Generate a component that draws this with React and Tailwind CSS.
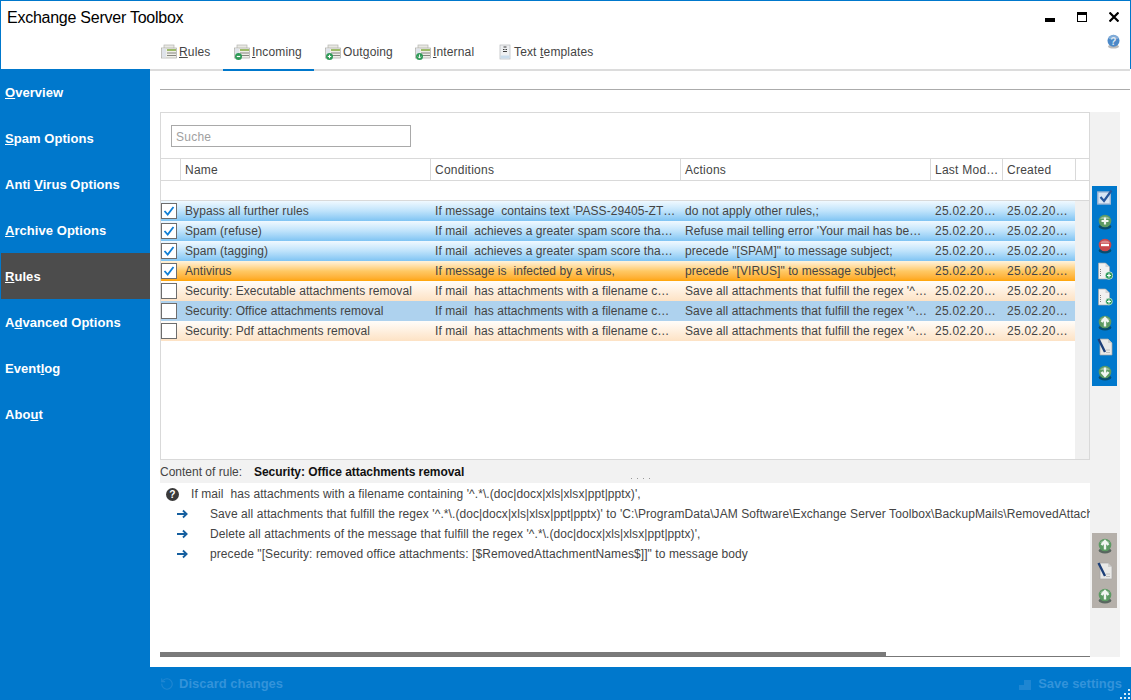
import React from "react";
import { RotateCcw } from "lucide-react";

const navItems = [
  { pre: "", key: "O", post: "verview" },
  { pre: "", key: "S", post: "pam Options" },
  { pre: "Anti ", key: "V", post: "irus Options" },
  { pre: "", key: "A", post: "rchive Options" },
  { pre: "", key: "R", post: "ules", active: true },
  { pre: "A", key: "d", post: "vanced Options" },
  { pre: "Event", key: "l", post: "og" },
  { pre: "Abo", key: "u", post: "t" },
];

const tabs = [
  { pre: "", key: "R", post: "ules", w: "w-[63px] pl-px", badge: null },
  { pre: "", key: "I", post: "ncoming", w: "w-[91px] pl-[11px]", badge: "minus" },
  { pre: "Out", key: "g", post: "oing", w: "w-[90px] pl-[11px]", badge: "plus" },
  { pre: "", key: "I", post: "nternal", w: "w-[90px] pl-[11px]", badge: "down" },
];

const rows = [
  { name: "Bypass all further rules", cond: "If message  contains text 'PASS-29405-ZT…", action: "do not apply other rules,;", tone: "blue", on: true },
  { name: "Spam (refuse)", cond: "If mail  achieves a greater spam score tha…", action: "Refuse mail telling error 'Your mail has be…", tone: "blue", on: true },
  { name: "Spam (tagging)", cond: "If mail  achieves a greater spam score tha…", action: "precede \"[SPAM]\" to message subject;", tone: "blue", on: true },
  { name: "Antivirus", cond: "If message is  infected by a virus,", action: "precede \"[VIRUS]\" to message subject;", tone: "orange", on: true },
  { name: "Security: Executable attachments removal", cond: "If mail  has attachments with a filename c…", action: "Save all attachments that fulfill the regex '^…", tone: "peach" },
  { name: "Security: Office attachments removal", cond: "If mail  has attachments with a filename c…", action: "Save all attachments that fulfill the regex '^…", tone: "selected" },
  { name: "Security: Pdf attachments removal", cond: "If mail  has attachments with a filename c…", action: "Save all attachments that fulfill the regex '^…", tone: "peach" },
];

const toneClass = {
  blue: "bg-gradient-to-b from-[#f0f9ff] via-[#bfe3fb] to-[#7fc4f3]",
  orange: "bg-gradient-to-b from-[#fff3dc] via-[#ffc964] to-[#ffa500]",
  peach: "bg-gradient-to-b from-[#fffdfa] to-[#fde2c4]",
  selected: "bg-[#aed2ee]",
};

const details = [
  "Save all attachments that fulfill the regex '^.*\\.(doc|docx|xls|xlsx|ppt|pptx)' to 'C:\\ProgramData\\JAM Software\\Exchange Server Toolbox\\BackupMails\\RemovedAttachments\\Office'",
  "Delete all attachments of the message that fulfill the regex '^.*\\.(doc|docx|xls|xlsx|ppt|pptx)',",
  "precede \"[Security: removed office attachments: [$RemovedAttachmentNames$]]\" to message body",
];

const Badge = ({ kind }) => (
  <>
    <circle cx="4.5" cy="12.5" r="3.5" fill="#2f9a57" />
    {kind === "plus" && <path d="M2.8 12.5h3.4M4.5 10.8v3.4" stroke="#fff" strokeWidth="1.1" />}
    {kind === "minus" && <path d="M2.8 12.5h3.4" stroke="#fff" strokeWidth="1.2" />}
    {kind === "down" && <path d="M4.5 10.5v3.6M3 12.6l1.5 1.5 1.5-1.5" stroke="#fff" strokeWidth="0.9" fill="none" />}
  </>
);

const SheetIcon = ({ badge }) => (
  <svg width="16" height="16" viewBox="0 0 16 16" className="mr-0.5 shrink-0">
    <rect x="3" y="1" width="10" height="4" fill="#e9e9e4" stroke="#b5b5b0" strokeWidth="0.7" />
    <rect x="0.5" y="4" width="15" height="10" fill="#efefe9" stroke="#aaaaa5" strokeWidth="0.7" />
    <rect x="1" y="4.5" width="4" height="9" fill="#dfe3ea" />
    <rect x="6" y="5" width="9" height="2" fill="#9dbb69" />
    <path d="M6 9h9M6 11.5h9" stroke="#85857f" strokeWidth="1" />
    {badge && <Badge kind={badge} />}
  </svg>
);

const TemplateIcon = () => (
  <svg width="16" height="16" viewBox="0 0 16 16" className="mr-px shrink-0">
    <rect x="3" y="1" width="10" height="14" fill="#eef0f2" stroke="#b5b8bb" strokeWidth="0.7" />
    <rect x="3.5" y="11.5" width="9" height="3" fill="#c9dcec" />
    <path d="M6.5 3h3M6 5.5h1.5M8.5 5.5h1.5M6 7.5h4" stroke="#3c3c3c" strokeWidth="1" />
  </svg>
);

const RoundIcon = ({ kind, red }) => (
  <svg width="16" height="17" viewBox="0 0 16 17">
    <ellipse cx="8" cy="13.5" rx="6.3" ry="3" fill="#0d2a22" opacity="0.55" />
    <circle cx="8" cy="8" r="6.3" fill={red ? "#c9474c" : "#5c9a63"} />
    <path d="M3 6a5.4 4 0 0 1 10 0z" fill="#fff" opacity="0.35" />
    {kind === "plus" && <path d="M4.5 8h7M8 4.5v7" stroke="#f2f6f2" strokeWidth="2.2" />}
    {kind === "minus" && <path d="M4 8h8" stroke="#fff" strokeWidth="2.4" />}
    {kind === "up" && <path d="M8 12.5V5M4.5 8 8 4l3.5 4" stroke="#f2f6f2" strokeWidth="2.4" fill="none" />}
    {kind === "down" && <path d="M8 3.5V11M4.5 8 8 12l3.5-4" stroke="#f2f6f2" strokeWidth="2.4" fill="none" />}
  </svg>
);

const CheckListIcon = () => (
  <svg width="16" height="16" viewBox="0 0 16 16">
    <rect x="0.8" y="3" width="12.5" height="12" fill="#d8e6f4" stroke="#9db4d2" strokeWidth="1.4" />
    <path d="M3.5 8 7 12l7.5-10.5" stroke="#27579c" strokeWidth="2.2" fill="none" />
  </svg>
);

const DocPlusIcon = ({ small }) => (
  <svg width="16" height="18" viewBox="0 0 16 18">
    <path d="M1.5 1h7l4 4v12h-11z" fill="#f1f1f1" stroke="#a8a8a8" strokeWidth="0.7" />
    <path d="M8.5 1v4h4" fill="#d4d4d4" />
    <path d="M3.5 7v7" stroke="#777" strokeWidth="0.9" strokeDasharray="1 1" />
    <circle cx="12" cy="13.5" r={small ? 3.4 : 3.8} fill="#2c9a5a" stroke="#fff" strokeWidth="0.6" />
    <path d="M10 13.5h4M12 11.5v4" stroke="#fff" strokeWidth="1.2" />
  </svg>
);

const PenDocIcon = () => (
  <svg width="16" height="18" viewBox="0 0 16 18">
    <path d="M3 1h8l4 4v12H3z" fill="#e9e9e7" stroke="#a8a8a8" strokeWidth="0.7" />
    <path d="M11 1v4h4" fill="#cfcfcd" />
    <path d="M9 12h4M9 14.5h4" stroke="#b5b5b5" strokeWidth="0.8" />
    <path d="M1.5 1l6.5 13" stroke="#1d3f78" strokeWidth="2.4" />
  </svg>
);

const HelpIcon = () => (
  <svg width="13" height="15" viewBox="0 0 13 15">
    <ellipse cx="6.5" cy="12.5" rx="5.5" ry="2" fill="#555" opacity="0.4" />
    <circle cx="6.5" cy="6.7" r="6" fill="#4c89c8" />
    <path d="M1.5 5a5 4 0 0 1 10 0z" fill="#fff" opacity="0.3" />
    <text x="6.5" y="10.5" textAnchor="middle" fontSize="10" fontWeight="700" fill="#dfe8f0" fontFamily="Liberation Sans, sans-serif">?</text>
  </svg>
);

const Checkbox = ({ on }) => (
  <div className="flex h-4 w-4 shrink-0 items-center justify-center border border-[#6d6d6d] bg-white">
    {on && (
      <svg width="12" height="12" viewBox="0 0 12 12">
        <path d="M1.5 6 4.7 9.6 10.5 2" stroke="#0f7fd6" strokeWidth="1.8" fill="none" />
      </svg>
    )}
  </div>
);

const HeaderCell = ({ className, children }) => (
  <div className={`flex h-full items-center truncate border-r border-[#d9d9d9] px-1 ${className}`}>{children}</div>
);

const Cell = ({ className, children }) => (
  <div className={`overflow-hidden text-ellipsis whitespace-pre px-1 ${className}`}>{children}</div>
);

const App = () => {
  return (
    <div className="flex h-[700px] w-[1131px] flex-col overflow-hidden bg-white text-[12px] tracking-[0.25px] text-[#444] font-['Liberation_Sans',Arial,sans-serif]">
      {/* top bar */}
      <div className="h-[69px] shrink-0 border-x border-t border-[#0078cc] bg-white">
        <div className="flex h-[34px] items-center justify-between pl-1.5 pr-[11px]">
          <div className="text-[16px] tracking-[-0.25px] text-black">Exchange Server Toolbox</div>
          <div className="mb-[3px] flex items-center">
            <div className="mt-[7px] h-1 w-[10px] bg-black" />
            <div className="ml-[22px] h-[10px] w-[10px] border border-black border-t-[3px]" />
            <svg width="10" height="10" viewBox="0 0 10 10" className="ml-[22px]">
              <path d="M0.5 0.5l9 9M9.5 0.5l-9 9" stroke="#000" strokeWidth="2.2" />
            </svg>
          </div>
        </div>
        <div className="flex h-[34px] items-start justify-between pr-[10px]">
          <div className="flex h-full pl-[159px] tracking-[0.15px]">
            {tabs.map((t) => (
              <div key={t.pre + t.key + t.post} className={`flex h-full items-center ${t.w}`}>
                <SheetIcon badge={t.badge} />
                <span>
                  {t.pre}
                  <span className="underline">{t.key}</span>
                  {t.post}
                </span>
              </div>
            ))}
            <div className="flex h-full items-center pl-[3px]">
              <TemplateIcon />
              <span>
                Text <span className="underline">t</span>emplates
              </span>
            </div>
          </div>
          <div className="-mt-px">
            <HelpIcon />
          </div>
        </div>
      </div>

      <div className="flex min-h-0 flex-1">
        {/* sidebar */}
        <div className="w-[150px] shrink-0 bg-[#0078cc] pl-px text-[13px] font-bold tracking-[0.05px] text-white">
          {navItems.map((item) => (
            <div
              key={item.pre + item.key + item.post}
              className={`flex h-[46px] items-center pl-1 pt-[2px] ${item.active ? "bg-[#4c4c4c]" : ""}`}
            >
              <span>
                {item.pre}
                <span className="underline">{item.key}</span>
                {item.post}
              </span>
            </div>
          ))}
        </div>

        {/* main column */}
        <div className="min-w-0 flex-1 bg-white pr-px">
          <div className="h-[2px] bg-[#dcdcdc]">
            <div className="ml-[73px] h-[2px] w-[91px] bg-[#0078cc]" />
          </div>
          <div className="ml-2.5 mt-[18px] h-px bg-[#ababab]" />

          <div className="ml-2.5 mt-[22px] w-[960px] bg-[#f2f2f2]">
            <div className="flex items-start">
              {/* rule list */}
              <div className="h-[348px] w-[930px] border border-[#d9d9d9] bg-white">
                <div className="flex h-[45px] items-start pl-2.5 pt-3">
                  <div className="flex h-[22px] w-[240px] items-center border border-[#a9a9a9] px-1 pt-[2px] text-[#a0a0a0]">Suche</div>
                </div>
                <div className="flex h-[23px] items-center border-y border-[#d9d9d9]">
                  <HeaderCell className="w-5 shrink-0" />
                  <HeaderCell className="w-[250px] shrink-0">Name</HeaderCell>
                  <HeaderCell className="w-[250px] shrink-0">Conditions</HeaderCell>
                  <HeaderCell className="w-[250px] shrink-0">Actions</HeaderCell>
                  <HeaderCell className="w-[72px] shrink-0">Last Mod…</HeaderCell>
                  <HeaderCell className="w-[73px] shrink-0">Created</HeaderCell>
                </div>
                <div className="h-5 border-b border-[#d9d9d9]" />
                <div className="flex h-[258px]">
                  <div className="w-[914px] shrink-0 tracking-[0.07px]">
                    {rows.map((row) => (
                      <div key={row.name} className={`flex h-5 items-center ${toneClass[row.tone]}`}>
                        <div className="flex w-5 shrink-0 items-center">
                          <Checkbox on={row.on} />
                        </div>
                        <Cell className="w-[250px] shrink-0">{row.name}</Cell>
                        <Cell className="w-[250px] shrink-0">{row.cond}</Cell>
                        <Cell className="w-[250px] shrink-0">{row.action}</Cell>
                        <Cell className="w-[72px] shrink-0 tracking-[0.25px]">25.02.20…</Cell>
                        <Cell className="w-[72px] shrink-0 tracking-[0.25px]">25.02.20…</Cell>
                      </div>
                    ))}
                  </div>
                  <div className="flex-1 bg-[#f0f0f0]" />
                </div>
              </div>

              {/* side strip */}
              <div className="h-[348px] w-[30px] pl-[2px] pt-[74px]">
                <div className="flex h-[200px] w-[25px] flex-col items-center justify-between bg-[#0078cc] pb-[5px] pt-[3px]">
                  <CheckListIcon />
                  <RoundIcon kind="plus" />
                  <RoundIcon kind="minus" red />
                  <DocPlusIcon />
                  <DocPlusIcon small />
                  <RoundIcon kind="up" />
                  <PenDocIcon />
                  <RoundIcon kind="down" />
                </div>
              </div>
            </div>

            {/* content of rule */}
            <div className="flex h-[23px] items-center tracking-normal">
              <span className="w-[94px] shrink-0">Content of rule:</span>
              <span className="font-bold tracking-[-0.05px] text-[#111]">Security: Office attachments removal</span>
              <div className="mb-[4px] ml-auto mr-[470px] flex gap-[5px] self-end">
                <div className="h-px w-px bg-[#999]" />
                <div className="h-px w-px bg-[#999]" />
                <div className="h-px w-px bg-[#999]" />
                <div className="h-px w-px bg-[#999]" />
              </div>
            </div>

            <div className="flex h-[174px] items-start">
              <div className="flex h-full w-[930px] flex-col overflow-hidden bg-white tracking-[0.08px]">
                <div className="min-h-0 flex-1 overflow-hidden pt-px">
                  <div className="flex h-5 items-center whitespace-pre pl-1.5">
                    <svg width="13" height="13" viewBox="0 0 14 14" className="mr-3 shrink-0">
                      <circle cx="7" cy="7" r="7" fill="#3a3a3a" />
                      <text x="7" y="11" textAnchor="middle" fontSize="11" fontWeight="700" fill="#fff" fontFamily="Liberation Sans, sans-serif">?</text>
                    </svg>
                    {"If mail  has attachments with a filename containing '^.*\\.(doc|docx|xls|xlsx|ppt|pptx)',"}
                  </div>
                  {details.map((line) => (
                    <div key={line} className="flex h-5 items-center whitespace-nowrap pl-[17px]">
                      <svg width="11" height="10" viewBox="0 0 12 10" className="mr-[22px] shrink-0">
                        <path d="M0 5h10M6.5 1.2 10.5 5 6.5 8.8" stroke="#155f9f" strokeWidth="2" fill="none" />
                      </svg>
                      {line}
                    </div>
                  ))}
                </div>
                <div className="h-[5px] shrink-0 border-b border-[#777]">
                  <div className="h-1 w-[726px] bg-[#7a7a7a]" />
                </div>
              </div>
              <div className="h-full w-[30px] pl-[2px] pt-[50px]">
                <div className="flex h-[75px] w-[25px] flex-col items-center justify-between bg-[#b5b0aa] py-1">
                  <RoundIcon kind="up" />
                  <PenDocIcon />
                  <RoundIcon kind="up" />
                </div>
              </div>
            </div>
          </div>
        </div>
      </div>

      {/* footer */}
      <div className="relative flex h-[33px] shrink-0 items-center justify-between bg-[#0078cc] pl-[160px] pr-[9px] text-[13px] font-bold tracking-normal text-[#3393da]">
        <div className="flex items-center gap-[5px]">
          <RotateCcw size={14} color="#1e86d2" />
          <span>Discard changes</span>
        </div>
        <div className="flex items-center gap-[5px]">
          <svg width="16" height="16" viewBox="0 0 16 16">
            <path d="M2 14V9h5V4h7v10z" fill="#1e86d2" />
          </svg>
          <span>Save settings</span>
        </div>
        <svg width="10" height="10" viewBox="0 0 10 10" className="absolute bottom-[1px] right-[1px]">
          <path d="M8 0h2v2H8zM4 4h2v2H4zM8 4h2v2H8zM0 8h2v2H0zM4 8h2v2H4zM8 8h2v2H8z" fill="#d9ecf9" />
        </svg>
      </div>
    </div>
  );
};

export default App;
